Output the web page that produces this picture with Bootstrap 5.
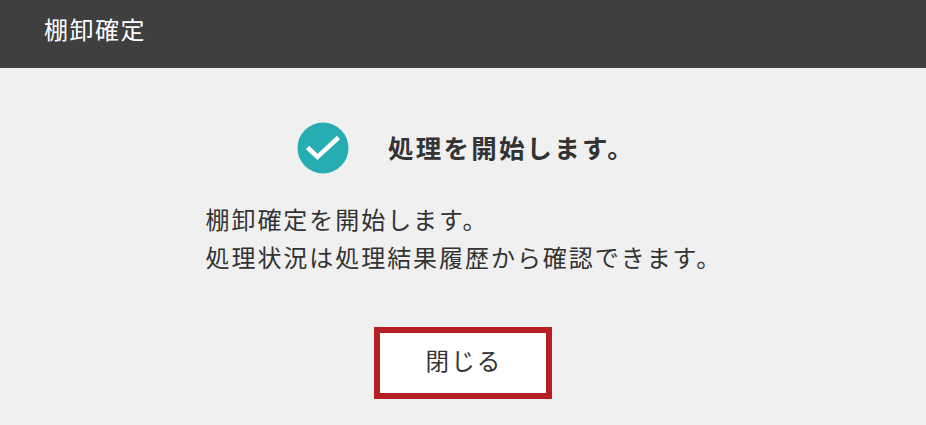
<!DOCTYPE html>
<html lang="ja"><head><meta charset="utf-8">
<link href="https://cdn.jsdelivr.net/npm/bootstrap@5.3.0/dist/css/bootstrap.min.css" rel="stylesheet">
<style>
html,body{height:100%;overflow:hidden}
body{background:#f0f0f0;color:#333;font-family:"Noto Sans CJK JP","Noto Sans",sans-serif}
.dlg-head{background:#3f3f3f;color:#fff;height:68px;padding-left:44px;font-size:24px;letter-spacing:1.5px;padding-bottom:10px}
.dlg-row{margin-left:6px}
.dlg-title{font-size:25.5px;font-weight:700;letter-spacing:2.2px;line-height:1;color:#333;margin-top:-3px}
.dlg-icon{width:52px;height:52px;margin-right:39px}
.dlg-msg{width:515px;margin:0;font-size:24px;line-height:38px;letter-spacing:1.95px;padding-top:26px;white-space:nowrap}
.dlg-close{width:178px;height:72px;border:6px solid #b62025;border-radius:0;background:#fff;font-size:23.5px;letter-spacing:2.2px;color:#333;margin-top:51px;padding:0 0 4px 2px}
.dlg-close:hover{background:#fff;border-color:#b62025;color:#333}
.dlg-top{padding-top:54px}
</style></head><body>
<div class="dlg-head d-flex align-items-center">棚卸確定</div>
<main class="dlg-top d-flex flex-column align-items-center">
<div class="d-flex align-items-center dlg-row">
<svg class="dlg-icon" viewBox="0 0 52 52"><circle cx="26" cy="26" r="25.5" fill="#26adb2"/><path d="M10.5 25.5l10 9.5L41.500 15.500" fill="none" stroke="#fff" stroke-width="4.500"/></svg>
<span class="dlg-title">処理を開始します。</span></div>
<p class="dlg-msg">棚卸確定を開始します。<br>処理状況は処理結果履歴から確認できます。</p>
<button type="button" class="btn dlg-close">閉じる</button>
</main>
<script src="https://cdn.jsdelivr.net/npm/bootstrap@5.3.0/dist/js/bootstrap.bundle.min.js"></script>
</body></html>
